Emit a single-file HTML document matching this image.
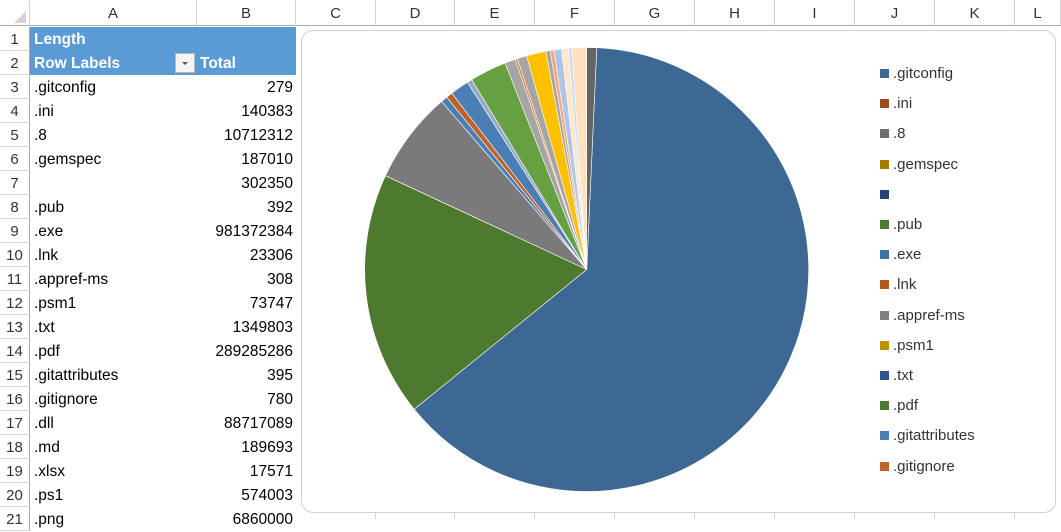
<!DOCTYPE html>
<html><head><meta charset="utf-8"><style>
body{margin:0;width:1061px;height:518px;overflow:hidden;background:#fff;font-family:"Liberation Sans",sans-serif;position:relative}
.ch{position:absolute;top:0;height:26px;background:#fff;border-right:1px solid #d4d4d4;border-bottom:1px solid #ababab;box-sizing:border-box;text-align:center;line-height:27px;font-size:15px;color:#333}
.rh{position:absolute;left:0;width:30px;height:24px;border-bottom:1px solid #d4d4d4;border-right:1px solid #ababab;box-sizing:border-box;text-align:center;line-height:25px;font-size:15px;color:#333}
.c{position:absolute;height:24px;line-height:25px;font-size:15.5px;color:#000;white-space:nowrap;box-sizing:border-box}
.hl{background:#5b9bd5;color:#fff;font-weight:bold}
.lg{position:absolute;left:880px;font-size:15px;color:#333;line-height:16px}
.lg i{display:inline-block;width:9px;height:9px;margin-right:4px;vertical-align:0px}
.vl{position:absolute;top:513px;width:1px;height:6px;background:#d4d4d4}
</style></head><body>
<div class="ch" style="left:0;width:30px"></div>
<svg style="position:absolute;left:12px;top:9px" width="16" height="16"><polygon points="14,2 14,14 2,14" fill="#d4d4d4"/></svg>
<div id="cols"></div><div id="rows"></div>
<div class="c hl" style="left:30px;top:27px;width:266px;padding-left:4px">Length</div>
<div class="c hl" style="left:30px;top:51px;width:266px;padding-left:4px">Row Labels</div>
<div style="position:absolute;left:175px;top:53px;width:20px;height:20px;background:#f4f4f4;border:1px solid #bbb;box-sizing:border-box"><svg width="18" height="18"><polygon points="6,8 12,8 9,11" fill="#555"/></svg></div>
<div class="c" style="left:200px;top:51px;color:#fff;font-weight:bold">Total</div>
<div id="data"></div>
<div style="position:absolute;left:301px;top:30px;width:755px;height:483px;border:1px solid #d0d0d0;border-radius:12px;background:#fff;box-sizing:border-box"></div>
<svg style="position:absolute;left:0;top:0" width="1061" height="518" id="pie"></svg>
<div id="leg"></div>
<script>
var cols=[["A",30,197],["B",197,296],["C",296,376],["D",376,455],["E",455,535],["F",535,615],["G",615,695],["H",695,775],["I",775,855],["J",855,935],["K",935,1015],["L",1015,1061]];
var h="";cols.forEach(function(c){h+='<div class="ch" style="left:'+c[1]+'px;width:'+(c[2]-c[1])+'px">'+c[0]+'</div>';if(c[1]>300)h+='<div class="vl" style="left:'+(c[1]-1)+'px"></div>'});
document.getElementById("cols").innerHTML=h;h="";
for(var i=1;i<=21;i++)h+='<div class="rh" style="top:'+(27+(i-1)*24)+'px">'+i+'</div>';
document.getElementById("rows").innerHTML=h;
var d=[[".gitconfig",279],[".ini",140383],[".8",10712312],[".gemspec",187010],["",302350],[".pub",392],[".exe",981372384],[".lnk",23306],[".appref-ms",308],[".psm1",73747],[".txt",1349803],[".pdf",289285286],[".gitattributes",395],[".gitignore",780],[".dll",88717089],[".md",189693],[".xlsx",17571],[".ps1",574003],[".png",6860000]];
h="";d.forEach(function(r,i){var t=75+i*24;h+='<div class="c" style="left:34px;top:'+t+'px">'+r[0]+'</div><div class="c" style="left:197px;width:96px;text-align:right;top:'+t+'px">'+r[1]+'</div>'});
document.getElementById("data").innerHTML=h;
var cx=586.7,cy=269.5,R=222;
var s=[[2.6,231,"#3e6894"],[231,295,"#4e7a30"],[295,319.2,"#7a7a7a"],[319.2,320.9,"#4a7fb5"],[320.9,322.6,"#c0622a"],[322.6,327.5,"#4a7fb5"],[327.5,328.8,"#9aa8c8"],[328.8,338.4,"#66a040"],[338.4,341.2,"#a5a5a5"],[341.2,341.8,"#ed7d31"],[341.8,344.3,"#a5a5a5"],[344.3,349.4,"#ffc000"],[349.4,350.5,"#a5a5a5"],[350.5,351.5,"#f4a582"],[351.5,353.5,"#adc6e5"],[353.5,355.3,"#fde8cc"],[355.3,356.1,"#c9d8ef"],[356.1,360,"#fde1c0"],[0,2.6,"#646464"]];
function p(a){a=a*Math.PI/180;return (cx+R*Math.sin(a)).toFixed(2)+","+(cy-R*Math.cos(a)).toFixed(2)}
h="";s.forEach(function(x){var l=(x[1]-x[0])>180?1:0;h+='<path d="M'+cx+','+cy+' L'+p(x[0])+' A'+R+','+R+' 0 '+l+' 1 '+p(x[1])+' Z" fill="'+x[2]+'" stroke="#fff" stroke-width="0.6"/>'});
document.getElementById("pie").innerHTML=h;
var L=[[".gitconfig","#3e6894"],[".ini","#9e4a1f"],[".8","#6d6d6d"],[".gemspec","#a67c00"],["","#264478"],[".pub","#4e7a30"],[".exe","#3e73a8"],[".lnk","#b5561f"],[".appref-ms","#7f7f7f"],[".psm1","#bf9000"],[".txt","#2f528f"],[".pdf","#4e7a30"],[".gitattributes","#4a7fb5"],[".gitignore","#c0622a"]];
h="";L.forEach(function(x,i){h+='<div class="lg" style="top:'+(66+i*30.2)+'px"><i style="background:'+x[1]+'"></i>'+x[0]+'</div>'});
document.getElementById("leg").innerHTML=h;
</script>
</body></html>
